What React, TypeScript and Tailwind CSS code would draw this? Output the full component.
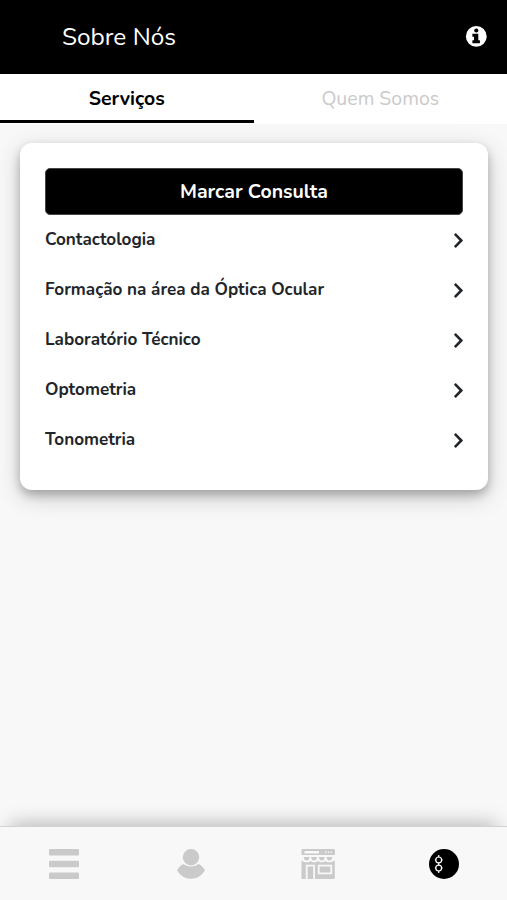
import { useState } from "react"
import { FaChevronRight } from "react-icons/fa"

const services = [
  "Contactologia",
  "Formação na área da Óptica Ocular",
  "Laboratório Técnico",
  "Optometria",
  "Tonometria",
]

function InfoIcon() {
  return (
    <svg width="22" height="22" viewBox="0 0 22 22">
      <circle cx="11.300" cy="10.400" r="10.400" fill="#fff" />
      <circle cx="11.300" cy="4.500" r="2.100" fill="#000" />
      <path d="M7.400 7.700h5.900v6.600h1.600v3H7.400v-3H9v-3.600H7.400z" fill="#000" />
    </svg>
  )
}

function MenuIcon() {
  return (
    <svg width="30" height="30" viewBox="0 0 30 30" fill="#cacaca">
      <rect y="0" width="30" height="6.4" rx="1" />
      <rect y="11.8" width="30" height="6.4" rx="1" />
      <rect y="23.6" width="30" height="6.4" rx="1" />
    </svg>
  )
}

function UserIcon() {
  return (
    <svg width="28" height="30" viewBox="0 0 28 30" fill="#cacaca">
      <path d="M6.500 15C4 16.200 1.500 18.200 0 21.300 3 26.500 8 29.800 14 29.800s11-3.300 14-8.500c-1.500-3.100-4-5.100-6.500-6.300-2 1.700-4.500 2.400-7.500 2.400s-5.500-.7-7.500-2.400z" />
      <circle cx="14" cy="8.200" r="8.200" />
    </svg>
  )
}

function StoreIcon() {
  return (
    <svg width="34" height="30" viewBox="0 0 34 30" fill="#cacaca">
      <path
        fillRule="evenodd"
        d="M1.500 0h31A1.500 1.500 0 0 1 34 1.500V6H.5V1.500A1.500 1.500 0 0 1 1.500 0zM3.500 2v2.500h14.500V2zM24 2.500v1.400h1.300V2.500zm2.800 0v1.400h1.300V2.500zm2.800 0v1.400h1.300V2.500z"
      />
      <path d="M2.800 8h5.600a2.800 3.400 0 0 1-5.600 0zM10.300 8h5.600a2.800 3.400 0 0 1-5.600 0zM18 8h5.600a2.800 3.400 0 0 1-5.600 0zM25.600 8h5.600a2.800 3.400 0 0 1-5.600 0z" />
      <path
        fillRule="evenodd"
        d="M.5 11c1.200 1.800 2.700 2.300 5.100 2.300 2.200 0 3.200-.5 4-1.400 1.900 1.900 5.300 1.900 7.400 0 2.100 1.900 5.500 1.900 7.400 0 .8.900 1.800 1.400 4 1.400 2.400 0 4.200-.5 5.400-2.300v18a1 1 0 0 1-1 1H14V15.800H4.800V30H1.500a1 1 0 0 1-1-1zM16.800 15.800v9.400h14.400v-9.400z"
      />
      <path d="M6.600 17.500h5.600V30H6.600zM18.600 17.600h10.800v5.800H18.600z" />
    </svg>
  )
}

function BrandIcon() {
  return (
    <svg width="30" height="30" viewBox="0 0 30 30">
      <circle cx="15" cy="15" r="15" fill="#000" />
      <g fill="none" stroke="#fff" strokeWidth="1.200">
        <circle cx="9.700" cy="10.900" r="2.900" />
        <circle cx="9.700" cy="19.100" r="2.900" />
        <path d="M9.700 6v2M9.700 13.700v2.600M9.700 22v2" />
        <path d="M6.400 10v1.800M13 10v1.800M6.400 18.200V20M13 18.200V20" strokeWidth=".8" />
      </g>
    </svg>
  )
}

export default function App() {
  const [tab, setTab] = useState("servicos")

  return (
    <div className="flex h-[900px] w-full flex-col overflow-hidden bg-[#f8f8f8] font-['Nunito','Lato',sans-serif] text-[#212529]">
      <header className="flex h-[74px] shrink-0 items-center justify-between bg-black pl-[62px] pr-5 text-white">
        <h1 className="text-[24.4px] leading-none">Sobre Nós</h1>
        <InfoIcon />
      </header>

      <nav className="flex h-[50px] shrink-0 bg-white text-[19.5px] leading-none">
        <button
          onClick={() => setTab("servicos")}
          className={
            tab === "servicos"
              ? "mb-px flex-1 border-b-[3px] border-black pt-[3px] font-bold text-black"
              : "mb-px flex-1 border-b-[3px] border-transparent pt-[3px] text-[#cacaca]"
          }
        >
          Serviços
        </button>
        <button
          onClick={() => setTab("quem")}
          className={
            tab === "quem"
              ? "mb-px flex-1 border-b-[3px] border-black pt-[3px] font-bold text-black"
              : "mb-px flex-1 border-b-[3px] border-transparent pt-[3px] text-[#cacaca]"
          }
        >
          Quem Somos
        </button>
      </nav>

      <main className="flex-1 pl-5 pr-[19px] pt-[19px]">
        <section className="h-[347px] rounded-xl bg-white px-[25px] pt-[25px] shadow-[0_5px_10px_rgba(0,0,0,0.24),0_7px_24px_rgba(0,0,0,0.19)]">
          <button className="h-[47px] w-full rounded-[5px] border border-[#444] bg-black text-[19.5px] font-bold leading-none text-white">
            Marcar Consulta
          </button>
          <ul>
            {services.map((service) => (
              <li key={service} className="flex h-[50px] items-center justify-between">
                <span className="text-[17.1px] font-bold leading-none">{service}</span>
                <FaChevronRight size={17} className="-mr-1" />
              </li>
            ))}
          </ul>
        </section>
      </main>

      <footer className="flex h-[74px] shrink-0 items-center border-t border-[#d2d2d2] bg-[#f8f8f8] shadow-[0_-12px_20px_-10px_rgba(0,0,0,0.28)]">
        <div className="flex flex-1 justify-center pl-px"><MenuIcon /></div>
        <div className="flex flex-1 justify-center pl-px"><UserIcon /></div>
        <div className="flex flex-1 justify-center"><StoreIcon /></div>
        <div className="flex flex-1 justify-center"><BrandIcon /></div>
      </footer>
    </div>
  )
}
